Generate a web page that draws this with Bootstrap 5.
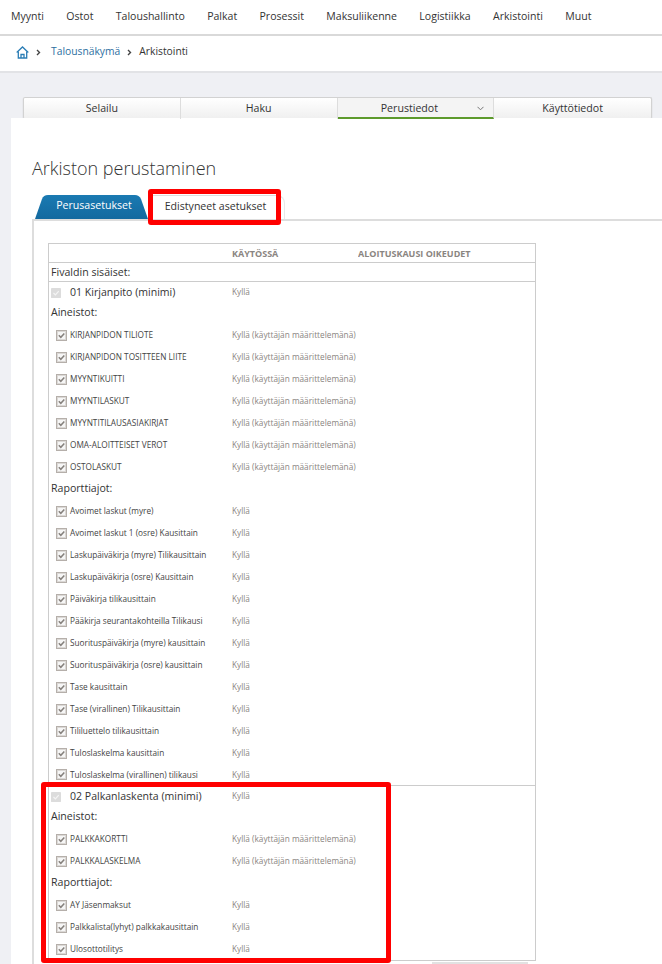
<!DOCTYPE html>
<html lang="fi">
<head>
<meta charset="utf-8">
<title>Arkiston perustaminen</title>
<link rel="stylesheet" href="https://cdn.jsdelivr.net/npm/bootstrap@5.3.0/dist/css/bootstrap.min.css">
<style>
html,body{height:964px;overflow:hidden}
body{font-family:"Open Sans",sans-serif;background:#eff0f4;color:#333;position:relative}
.topbar{height:36px;background:#fff;border-bottom:2px solid #d9d9d9;padding-left:11px;gap:22.35px;font-size:10.55px;color:#333;align-items:center}
.crumbbar{height:37px;background:#fff;border-bottom:2px solid #e2e3e6;padding:0 0 3px 16px;font-size:10.3px;gap:7px;align-items:center;margin:0}
.crumbbar a{color:#2d6f9f;text-decoration:none}
.crumb-first{margin-left:3px}
.subtabs{margin:24px 10px 0 23px;height:22px;border-radius:2px;box-shadow:0 1px 1px #aaa;border:1px solid #d2d2d2;border-bottom:0;background:linear-gradient(#fff,#efefef)}
.subtab{flex:0 0 25%;text-align:center;font-size:10.6px;line-height:20px;border-right:1px solid #ddd;color:#333;position:relative}
.subtab:last-child{border-right:0}
.subtab-on{background:#f4f4f4;border-bottom:2px solid #5d9a2c;color:#333;padding-right:12px}
.subtab-on svg{position:absolute;right:9px;top:8px}
.sheet{margin-left:11px;background:#fff;height:846px;padding:39px 0 0 21px;margin-top:-1px}
.sheet-title{font-size:18px;font-weight:300;line-height:22px;margin:0 0 16px;color:#333}
.ftabs{height:24px;margin-bottom:0;position:relative}
.ftab-a{margin-left:3px;width:113px;height:24px;background:linear-gradient(#1a7ab2,#13699f);color:#fff;font-size:10.6px;line-height:21px;text-align:center;padding-left:5px;clip-path:path('M0 24 L7 4 Q8.500 0 13 0 H100 Q104 0 106 4 L113 24 Z')}
.ftab-b{margin-left:4px;width:133px;height:24px;background:#fff;border-top:1px solid #ddd;border-right:1px solid #e8e8e8;border-radius:0 8px 0 0;font-size:10.6px;line-height:21px;text-align:center;padding-right:5px;color:#333}
.fbody{border-top:2px solid #ddd;border-left:2px solid #ddd;padding:22px 0 0 14px;height:760px}
.atable{width:488px;table-layout:fixed;border:1px solid #ccc;border-collapse:separate;border-spacing:0;margin:0;--bs-table-bg:transparent}
.atable td,.atable th{padding:0;border:0;vertical-align:middle;white-space:nowrap;overflow:hidden;box-shadow:none;font-size:8.25px;line-height:12px}
.c1{width:183px}.c2{width:126px}
.atable th{height:19px;font-size:9px;font-weight:700;color:#8a8581;border-bottom:1px solid #ccc;padding-top:1px}
.atable .rgroup td{height:19px;font-size:10.6px;color:#333;padding-left:2px;border-bottom:1px solid #ccc}
.rprod td{height:20px}
.rprod .lbl{font-size:10.55px;color:#333;margin-left:9px}
.atable .rhead td{height:22px;font-size:10.6px;color:#333;padding:0 0 2px 2px}
.ritem td{height:22px}
.ritem .lbl{font-size:8.25px;color:#444;padding-left:3px;vertical-align:middle}
.ck{vertical-align:middle}
.atable .cellk{padding-left:7px}
.atable .cellp{padding-left:2px}
.atable .val{color:#8a8581}
.sep td{border-bottom:1px solid #ccc}
.redmark{position:absolute;border:5px solid #f00;border-radius:3px;pointer-events:none}
.mark-a{left:148px;top:189px;width:133px;height:36px}
.mark-b{left:41px;top:782px;width:350px;height:181px}
.footstrip{position:absolute;left:432px;top:962px;width:96px;height:2px;background:#e2e2e2}
</style>
</head>
<body>
<svg width="0" height="0" class="position-absolute">
<symbol id="ckon" viewBox="0 0 11 11"><rect x=".5" y=".5" width="10" height="10" fill="#fff" stroke="#b5afaa"/><rect x="1.500" y="1.500" width="8" height="8" fill="#f6f6f6" stroke="#dbd8d5"/><path d="M2.800 5.300l2 2L8.300 3.500" fill="none" stroke="#85807c" stroke-width="1.500"/></symbol>
<symbol id="ckoff" viewBox="0 0 12 12"><rect width="12" height="12" rx="1" fill="#dcdcdc"/><path d="M3 6l2.300 2.300L9.300 3.800" fill="none" stroke="#f4f4f4" stroke-width="1.500"/></symbol>
</svg>

<nav class="topbar d-flex">
<span>Myynti</span><span>Ostot</span><span>Taloushallinto</span><span>Palkat</span><span>Prosessit</span><span>Maksuliikenne</span><span>Logistiikka</span><span>Arkistointi</span><span>Muut</span>
</nav>

<div class="crumbbar d-flex">
<svg width="13" height="13" viewBox="0 0 13 13" fill="none" stroke="#2b7db5" stroke-width="1.300"><path d="M.7 6.500L6.500 1l5.800 5.500"/><path d="M2.300 5.500V12h8.400V5.500"/><path d="M5 12V8.500h3V12"/></svg>
<svg width="5" height="7" viewBox="0 0 5 7" fill="none" stroke="#444" stroke-width="1.400"><path d="M1 1l2.500 2.500L1 6"/></svg>
<a href="#" class="crumb-first">Talousnäkymä</a>
<svg width="5" height="7" viewBox="0 0 5 7" fill="none" stroke="#444" stroke-width="1.400"><path d="M1 1l2.500 2.500L1 6"/></svg>
<span>Arkistointi</span>
</div>

<div class="subtabs d-flex">
<div class="subtab">Selailu</div>
<div class="subtab">Haku</div>
<div class="subtab subtab-on">Perustiedot<svg width="7" height="5" viewBox="0 0 7 5" fill="none" stroke="#777"><path d="M.5 .8l3 3 3-3"/></svg></div>
<div class="subtab">Käyttötiedot</div>
</div>

<main class="sheet">
<h1 class="sheet-title">Arkiston perustaminen</h1>
<div class="ftabs d-flex">
<div class="ftab-a">Perusasetukset</div>
<div class="ftab-b">Edistyneet asetukset</div>
</div>
<div class="fbody">
<table class="table atable">
<colgroup><col class="c1"><col class="c2"><col></colgroup>
<thead><tr><th></th><th>KÄYTÖSSÄ</th><th>ALOITUSKAUSI OIKEUDET</th></tr></thead>
<tbody>
<tr class="rgroup"><td colspan="3">Fivaldin sisäiset:</td></tr>
<tr class="rprod"><td class="cellp"><svg class="ck" width="10" height="10"><use href="#ckoff"/></svg><span class="lbl">01 Kirjanpito (minimi)</span></td><td class="val">Kyllä</td><td></td></tr>
<tr class="rhead"><td colspan="3">Aineistot:</td></tr>
<tr class="ritem"><td class="cellk"><svg class="ck" width="11" height="11"><use href="#ckon"/></svg><span class="lbl">KIRJANPIDON TILIOTE</span></td><td class="val">Kyllä (käyttäjän määrittelemänä)</td><td></td></tr>
<tr class="ritem"><td class="cellk"><svg class="ck" width="11" height="11"><use href="#ckon"/></svg><span class="lbl">KIRJANPIDON TOSITTEEN LIITE</span></td><td class="val">Kyllä (käyttäjän määrittelemänä)</td><td></td></tr>
<tr class="ritem"><td class="cellk"><svg class="ck" width="11" height="11"><use href="#ckon"/></svg><span class="lbl">MYYNTIKUITTI</span></td><td class="val">Kyllä (käyttäjän määrittelemänä)</td><td></td></tr>
<tr class="ritem"><td class="cellk"><svg class="ck" width="11" height="11"><use href="#ckon"/></svg><span class="lbl">MYYNTILASKUT</span></td><td class="val">Kyllä (käyttäjän määrittelemänä)</td><td></td></tr>
<tr class="ritem"><td class="cellk"><svg class="ck" width="11" height="11"><use href="#ckon"/></svg><span class="lbl">MYYNTITILAUSASIAKIRJAT</span></td><td class="val">Kyllä (käyttäjän määrittelemänä)</td><td></td></tr>
<tr class="ritem"><td class="cellk"><svg class="ck" width="11" height="11"><use href="#ckon"/></svg><span class="lbl">OMA-ALOITTEISET VEROT</span></td><td class="val">Kyllä (käyttäjän määrittelemänä)</td><td></td></tr>
<tr class="ritem"><td class="cellk"><svg class="ck" width="11" height="11"><use href="#ckon"/></svg><span class="lbl">OSTOLASKUT</span></td><td class="val">Kyllä (käyttäjän määrittelemänä)</td><td></td></tr>
<tr class="rhead"><td colspan="3">Raporttiajot:</td></tr>
<tr class="ritem"><td class="cellk"><svg class="ck" width="11" height="11"><use href="#ckon"/></svg><span class="lbl">Avoimet laskut (myre)</span></td><td class="val">Kyllä</td><td></td></tr>
<tr class="ritem"><td class="cellk"><svg class="ck" width="11" height="11"><use href="#ckon"/></svg><span class="lbl">Avoimet laskut 1 (osre) Kausittain</span></td><td class="val">Kyllä</td><td></td></tr>
<tr class="ritem"><td class="cellk"><svg class="ck" width="11" height="11"><use href="#ckon"/></svg><span class="lbl">Laskupäiväkirja (myre) Tilikausittain</span></td><td class="val">Kyllä</td><td></td></tr>
<tr class="ritem"><td class="cellk"><svg class="ck" width="11" height="11"><use href="#ckon"/></svg><span class="lbl">Laskupäiväkirja (osre) Kausittain</span></td><td class="val">Kyllä</td><td></td></tr>
<tr class="ritem"><td class="cellk"><svg class="ck" width="11" height="11"><use href="#ckon"/></svg><span class="lbl">Päiväkirja tilikausittain</span></td><td class="val">Kyllä</td><td></td></tr>
<tr class="ritem"><td class="cellk"><svg class="ck" width="11" height="11"><use href="#ckon"/></svg><span class="lbl">Pääkirja seurantakohteilla Tilikausi</span></td><td class="val">Kyllä</td><td></td></tr>
<tr class="ritem"><td class="cellk"><svg class="ck" width="11" height="11"><use href="#ckon"/></svg><span class="lbl">Suorituspäiväkirja (myre) kausittain</span></td><td class="val">Kyllä</td><td></td></tr>
<tr class="ritem"><td class="cellk"><svg class="ck" width="11" height="11"><use href="#ckon"/></svg><span class="lbl">Suorituspäiväkirja (osre) kausittain</span></td><td class="val">Kyllä</td><td></td></tr>
<tr class="ritem"><td class="cellk"><svg class="ck" width="11" height="11"><use href="#ckon"/></svg><span class="lbl">Tase kausittain</span></td><td class="val">Kyllä</td><td></td></tr>
<tr class="ritem"><td class="cellk"><svg class="ck" width="11" height="11"><use href="#ckon"/></svg><span class="lbl">Tase (virallinen) Tilikausittain</span></td><td class="val">Kyllä</td><td></td></tr>
<tr class="ritem"><td class="cellk"><svg class="ck" width="11" height="11"><use href="#ckon"/></svg><span class="lbl">Tililuettelo tilikausittain</span></td><td class="val">Kyllä</td><td></td></tr>
<tr class="ritem"><td class="cellk"><svg class="ck" width="11" height="11"><use href="#ckon"/></svg><span class="lbl">Tuloslaskelma kausittain</span></td><td class="val">Kyllä</td><td></td></tr>
<tr class="ritem sep"><td class="cellk"><svg class="ck" width="11" height="11"><use href="#ckon"/></svg><span class="lbl">Tuloslaskelma (virallinen) tilikausi</span></td><td class="val">Kyllä</td><td></td></tr>
<tr class="rprod"><td class="cellp"><svg class="ck" width="10" height="10"><use href="#ckoff"/></svg><span class="lbl">02 Palkanlaskenta (minimi)</span></td><td class="val">Kyllä</td><td></td></tr>
<tr class="rhead"><td colspan="3">Aineistot:</td></tr>
<tr class="ritem"><td class="cellk"><svg class="ck" width="11" height="11"><use href="#ckon"/></svg><span class="lbl">PALKKAKORTTI</span></td><td class="val">Kyllä (käyttäjän määrittelemänä)</td><td></td></tr>
<tr class="ritem"><td class="cellk"><svg class="ck" width="11" height="11"><use href="#ckon"/></svg><span class="lbl">PALKKALASKELMA</span></td><td class="val">Kyllä (käyttäjän määrittelemänä)</td><td></td></tr>
<tr class="rhead"><td colspan="3">Raporttiajot:</td></tr>
<tr class="ritem"><td class="cellk"><svg class="ck" width="11" height="11"><use href="#ckon"/></svg><span class="lbl">AY Jäsenmaksut</span></td><td class="val">Kyllä</td><td></td></tr>
<tr class="ritem"><td class="cellk"><svg class="ck" width="11" height="11"><use href="#ckon"/></svg><span class="lbl">Palkkalista(lyhyt) palkkakausittain</span></td><td class="val">Kyllä</td><td></td></tr>
<tr class="ritem"><td class="cellk"><svg class="ck" width="11" height="11"><use href="#ckon"/></svg><span class="lbl">Ulosottotilitys</span></td><td class="val">Kyllä</td><td></td></tr>
</tbody>
</table>
</div>
</main>
<div class="redmark mark-a"></div>
<div class="redmark mark-b"></div>
<div class="footstrip"></div>
</body>
</html>
